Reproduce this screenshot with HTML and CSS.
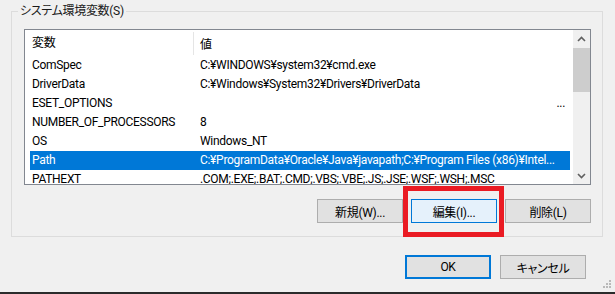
FILE: index.html
```html
<!DOCTYPE html>
<html lang="ja">
<head>
<meta charset="UTF-8">
<title>環境変数</title>
<link rel="stylesheet" href="styles.css">
</head>
<body>
<div class="dialog">
<fieldset class="group">
<legend>システム環境変数(S)</legend>
<div class="listbox">
<div class="list">
<div class="list-head">
<div class="col-name">変数</div>
<div class="col-value">値</div>
</div>
<div class="row"><div class="col-name">ComSpec</div><div class="col-value">C:¥WINDOWS¥system32¥cmd.exe</div></div>
<div class="row"><div class="col-name">DriverData</div><div class="col-value">C:¥Windows¥System32¥Drivers¥DriverData</div></div>
<div class="row"><div class="col-name">ESET_OPTIONS</div><div class="col-value trail">...</div></div>
<div class="row"><div class="col-name">NUMBER_OF_PROCESSORS</div><div class="col-value">8</div></div>
<div class="row"><div class="col-name">OS</div><div class="col-value">Windows_NT</div></div>
<div class="row selected"><div class="col-name">Path</div><div class="col-value">C:¥ProgramData¥Oracle¥Java¥javapath;C:¥Program Files (x86)¥Intel...</div></div>
<div class="row"><div class="col-name">PATHEXT</div><div class="col-value">.COM;.EXE;.BAT;.CMD;.VBS;.VBE;.JS;.JSE;.WSF;.WSH;.MSC</div></div>
</div>
<div class="scrollbar">
<div class="arrow"><svg width="9" height="6" viewBox="0 0 9 6"><path d="M1 5 L4.5 1.5 L8 5" fill="none" stroke="#606060" stroke-width="1.6"/></svg></div>
<div class="track"><div class="thumb"></div></div>
<div class="arrow"><svg width="9" height="6" viewBox="0 0 9 6"><path d="M1 1 L4.5 4.5 L8 1" fill="none" stroke="#606060" stroke-width="1.6"/></svg></div>
</div>
</div>
<div class="list-buttons">
<button class="btn">新規(W)...</button>
<span class="marked"><button class="btn hover">編集(I)...</button></span>
<button class="btn">削除(L)</button>
</div>
</fieldset>
<div class="dialog-buttons">
<button class="btn default">OK</button>
<button class="btn">キャンセル</button>
</div>
<div class="grip">
<svg width="9" height="9" viewBox="0 0 9 9">
<rect x="6" y="0" width="2" height="2" fill="#b9b9b9"/>
<rect x="3" y="3" width="2" height="2" fill="#b9b9b9"/>
<rect x="6" y="3" width="2" height="2" fill="#b9b9b9"/>
<rect x="0" y="6" width="2" height="2" fill="#b9b9b9"/>
<rect x="3" y="6" width="2" height="2" fill="#b9b9b9"/>
<rect x="6" y="6" width="2" height="2" fill="#b9b9b9"/>
</svg>
</div>
</div>
<div class="taskbar"></div>
</body>
</html>
```

FILE: styles.css
```css
:root {
--face: #f0f0f0;
--accent: #0078d7;
--btn-bg: #e1e1e1;
--btn-border: #adadad;
}

html, body {
margin: 0;
padding: 0;
}

body {
width: 615px;
height: 294px;
overflow: hidden;
background-color: var(--face);
font-family: Roboto, "Noto Sans CJK JP", sans-serif;
font-size: 12px;
letter-spacing: -0.3px;
font-feature-settings: "palt";
color: #000;
display: flex;
flex-direction: column;
}

.dialog {
flex: 1;
position: relative;
padding-top: 2px;
}

.group {
margin: 0 12px 0 11px;
padding: 0 11px 13px 12px;
border: 1px solid #dcdcdc;
min-width: 0;
}

.group legend {
margin-left: -6px;
padding: 0 2px;
line-height: 18px;
color: #1a1a1a;
}

.listbox {
margin-top: 9px;
height: 154px;
border: 1px solid #828790;
background: white;
display: flex;
overflow: hidden;
}

.list {
flex: 1;
min-width: 0;
padding: 0 3px 0 5px;
}

.list-head {
display: flex;
height: 26px;
align-items: center;
}

.list-head .col-name {
width: 161px;
padding-left: 2px;
border-right: 1px solid #e5e5e5;
margin-right: 4px;
height: 23px;
line-height: 23px;
}

.list-head .col-value {
padding-left: 2px;
}

.row {
display: flex;
height: 19px;
line-height: 19px;
white-space: nowrap;
}

.row .col-name {
width: 166px;
padding-left: 2px;
}

.row .col-value {
flex: 1;
min-width: 0;
padding-left: 2px;
overflow: hidden;
}

.row .trail {
text-align: right;
padding-right: 5px;
}

.row.selected {
background: var(--accent);
color: white;
}

.scrollbar {
width: 17px;
flex-shrink: 0;
background: var(--face);
display: flex;
flex-direction: column;
}

.scrollbar .arrow {
height: 17px;
display: flex;
align-items: center;
justify-content: center;
}

.scrollbar .track {
flex: 1;
padding-top: 1px;
}

.scrollbar .thumb {
height: 44px;
background: #cdcdcd;
}

.list-buttons {
display: flex;
justify-content: flex-end;
gap: 8px;
margin-top: 14px;
}

.btn {
width: 86px;
height: 24px;
padding: 0;
font-family: inherit;
font-size: 12px;
letter-spacing: inherit;
font-feature-settings: inherit;
color: #000;
background: var(--btn-bg);
border: 1px solid var(--btn-border);
border-radius: 0;
}

.btn.hover {
background: #e5f1fb;
border-color: var(--accent);
}

.btn.default {
border: 2px solid var(--accent);
}

.marked {
position: relative;
display: flex;
}

.marked::after {
content: "";
position: absolute;
left: -8px;
right: -7px;
top: -13px;
bottom: -14px;
border: 5px solid #ea1b23;
}

.dialog-buttons {
display: flex;
justify-content: flex-end;
gap: 9px;
margin-top: 18px;
padding-right: 29px;
}

.grip {
position: absolute;
right: 3px;
bottom: 3px;
line-height: 0;
}

.taskbar {
height: 2px;
background: #2b2b2b;
}
```
